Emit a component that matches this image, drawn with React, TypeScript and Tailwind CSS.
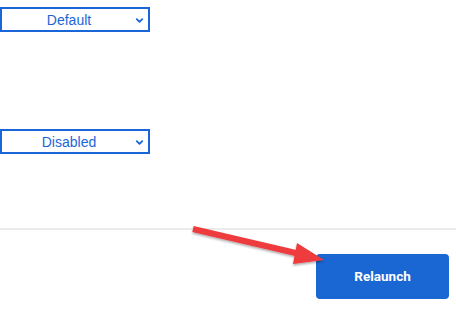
import { ChevronDown } from "lucide-react";

function Select({ value }: { value: string }) {
  return (
    <div className="relative flex h-[25px] w-[150px] items-center border-2 border-[#1a66d9] bg-white">
      <span className="flex-1 pr-[12px] text-center text-[14px] leading-none text-[#1a66d9]" style={{ fontFamily: "'Liberation Sans', Arial, sans-serif" }}>
        {value}
      </span>
      <ChevronDown className="absolute right-[3px] top-[6px] h-[11px] w-[11px] text-[#1a66d9]" strokeWidth={4} />
    </div>
  );
}

export default function App() {
  return (
    <div className="relative h-[323px] w-[456px] overflow-hidden bg-white" style={{ fontFamily: "Roboto, 'Liberation Sans', sans-serif" }}>
      <div className="flex flex-col">
        <div className="pt-[7px]">
          <Select value="Default" />
        </div>
        <div className="pt-[97px]">
          <Select value="Disabled" />
        </div>
        <div className="mt-[74px] h-[2px] w-full bg-[#ebebeb]" />
        <div className="flex justify-end pr-[7px] pt-[24px]">
          <button className="h-[45px] w-[133px] rounded-[4px] bg-[#1a66d2] text-[13.5px] font-bold text-white">
            Relaunch
          </button>
        </div>
      </div>
      <svg className="pointer-events-none absolute left-0 top-0" width="456" height="323" viewBox="0 0 456 323">
        <defs>
          <filter id="sh" x="-10%" y="-10%" width="120%" height="140%">
            <feDropShadow dx="0" dy="1.5" stdDeviation="0.8" floodColor="#000" floodOpacity="0.35" />
          </filter>
        </defs>
        <g filter="url(#sh)">
          <line x1="193" y1="229" x2="300" y2="254" stroke="#ee3a3d" strokeWidth="6" />
          <polygon points="324,260 297,243 293,264" fill="#ee3a3d" />
        </g>
      </svg>
    </div>
  );
}
